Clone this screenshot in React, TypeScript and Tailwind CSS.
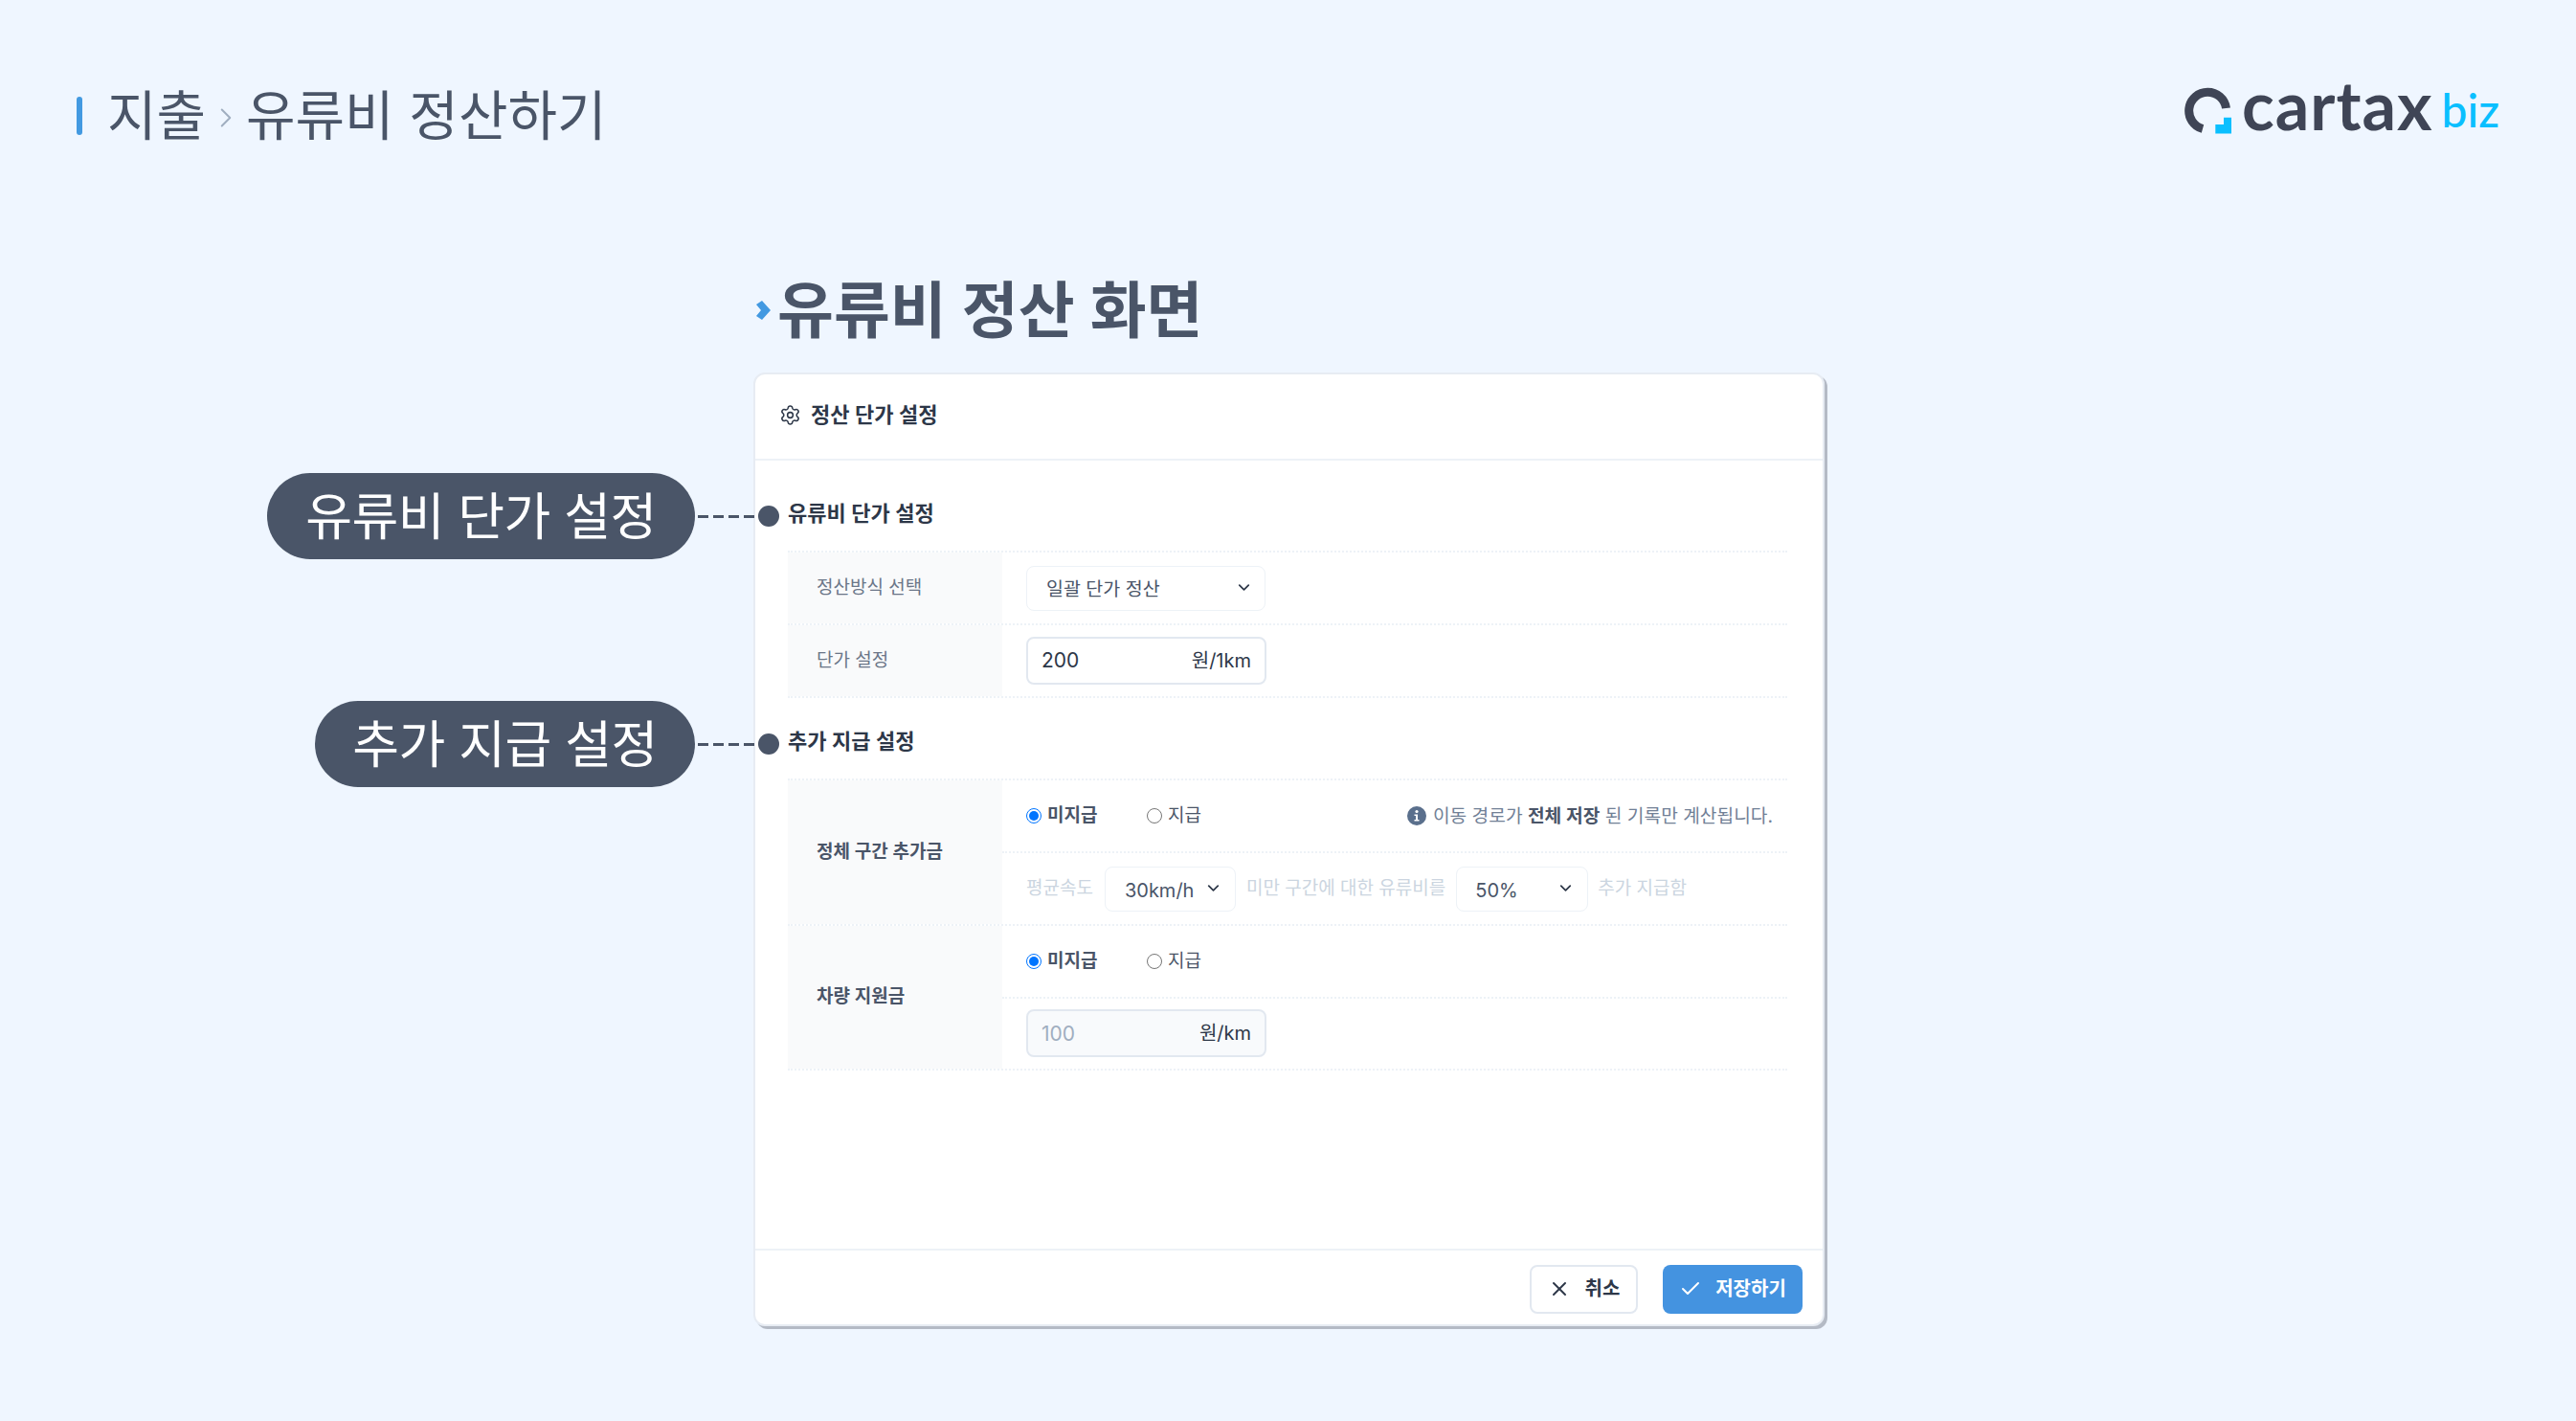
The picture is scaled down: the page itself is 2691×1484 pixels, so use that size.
import React from 'react';
import { ChevronDown, ChevronRight, Settings, X, Check } from 'lucide-react';

const FONT = 'font-[Inter,"Noto_Sans_CJK_KR",sans-serif]';

function Callout({ label, top, width }: { label: string; top: string; width: string }) {
  return (
    <div className={`absolute right-[calc(100%-25px)] flex items-center ${top}`}>
      <div className={`h-[90px] pt-[3px] rounded-full bg-[#4a5568] flex items-center justify-center text-white text-[53px] tracking-[-0.5px] ${width}`}>{label}</div>
      <div className="w-[63px] h-[3px] ml-[3px] bg-[repeating-linear-gradient(to_right,#4a5568_0,#4a5568_11px,transparent_11px,transparent_16px)]" />
      <div className="w-[22px] h-[22px] rounded-full bg-[#4a5568]" />
    </div>
  );
}

function Select({ value, width, height, pl, compact }: { value: string; width: string; height: string; pl: string; compact?: boolean }) {
  return (
    <div className={`flex items-center justify-between bg-white border border-[#edf2f7] rounded-lg text-[#4a5568] ${width} ${height} ${pl} ${compact ? 'pr-[13px] text-[20px]' : 'pr-[12px] text-[19.5px]'}`}>
      <span className="mt-[3px]">{value}</span>
      <ChevronDown size={19} strokeWidth={2.2} className="text-[#2d3748] -mt-[2px]" />
    </div>
  );
}

function Radio({ label, checked }: { label: string; checked?: boolean }) {
  return (
    <div className={`flex items-center gap-[6px] text-[19px] text-[#4a5568] ${checked ? 'font-semibold w-[126px]' : ''}`}>
      {checked ? (
        <span className="w-[16px] h-[16px] rounded-full border border-[#0075ff] flex items-center justify-center">
          <span className="w-[10px] h-[10px] rounded-full bg-[#0075ff]" />
        </span>
      ) : (
        <span className="w-[16px] h-[16px] rounded-full border border-[#767676] bg-white" />
      )}
      <span>{label}</span>
    </div>
  );
}

function Row({ label, children }: { label: string; children: React.ReactNode }) {
  return (
    <div className="flex h-[76px] border-b-2 border-dotted border-[#edf2f7]">
      <div className="w-[224px] bg-[#f9fafb] pl-[30px] flex items-center text-[19px] text-[#6b7688]">{label}</div>
      <div className="flex-1 pl-[25px] flex items-center">{children}</div>
    </div>
  );
}

function SubRow({ children, last }: { children: React.ReactNode; last?: boolean }) {
  return <div className={`flex-1 pl-[25px] pr-[15px] flex items-center ${last ? '' : 'border-b-2 border-dotted border-[#edf2f7]'}`}>{children}</div>;
}

export default function App() {
  return (
    <div className={`h-[1484px] bg-[#eff6ff] overflow-hidden text-[#2d3748] ${FONT}`}>
      <header className="flex items-start justify-between pt-[79px] pl-[80px] pr-[80px] h-[280px]">
        <div className="flex items-center text-[#4a5568] text-[56px] leading-[84px] h-[84px]">
          <div className="w-[6px] h-[40px] rounded-full bg-[#4299e1] mr-[26px]" />
          <span>지출</span>
          <ChevronRight size={34} strokeWidth={1.4} className="text-[#a0aec0] mx-[4px] mt-1" />
          <span>유류비 정산하기</span>
        </div>
        <div className="flex items-end h-[70px] -mt-[5px]">
          <svg width="50" height="50" viewBox="0 0 50 50" className="mb-[3px]">
            <path d="M 19 43.5 A 19.5 19.5 0 1 1 43.5 22" fill="none" stroke="#3f4556" strokeWidth="9" />
            <path d="M 41 31.7 H 49 V 48.5 H 32.3 V 39 H 41 Z" fill="#0abfff" />
          </svg>
          <span className="ml-[10px] text-[#3f4556] text-[70px] leading-[70px] font-bold tracking-[1px] font-[Lato,sans-serif]">cartax</span>
          <span className="ml-[9px] text-[#0abfff] text-[48px] leading-[58px] font-medium font-[Lato,sans-serif]">biz</span>
        </div>
      </header>

      <main className="ml-[787px] w-[1119px]">
        <div className="flex items-center h-[100px] mt-[-6px] mb-[15px]">
          <svg width="15" height="20" viewBox="0 0 15 20" className="ml-[3px] -mt-[1px]">
            <polygon points="0,4 6,0 15,10 6,20 0,16 5,10" fill="#4299e1" />
          </svg>
          <h1 className="ml-[7px] text-[64px] font-semibold text-[#4a5568]">유류비 정산 화면</h1>
        </div>

        <section className="relative h-[996px] flex flex-col bg-white rounded-[12px] border-2 border-[#e7ecf3] shadow-[3px_3px_0_#b4bac5]">
          <Callout label="유류비 단가 설정" top="top-[103px]" width="w-[447px]" />
          <Callout label="추가 지급 설정" top="top-[341px]" width="w-[397px]" />

          <div className="h-[90px] shrink-0 border-b-2 border-[#edf2f7] flex items-center gap-[10px] pl-[25px] pb-[3px] text-[22px] font-semibold">
            <Settings size={23} strokeWidth={1.6} />
            <span>정산 단가 설정</span>
          </div>

          <div className="flex-1 pl-[34px] pr-[37px]">
            <h2 className="h-[94px] pt-[37px] text-[22px] leading-[36px] font-semibold">유류비 단가 설정</h2>
            <div className="border-t-2 border-dotted border-[#edf2f7]">
              <Row label="정산방식 선택">
                <Select value="일괄 단가 정산" width="w-[250px]" height="h-[47px]" pl="pl-[20px]" />
              </Row>
              <Row label="단가 설정">
                <div className="w-[251px] h-[50px] bg-white border-2 border-[#e2e8f0] rounded-lg px-[14px] flex items-center justify-between text-[21px]">
                  <span>200</span>
                  <span className="text-[20px]">원/1km</span>
                </div>
              </Row>
            </div>

            <h2 className="h-[84px] pt-[27px] text-[22px] leading-[36px] font-semibold">추가 지급 설정</h2>
            <div className="border-t-2 border-dotted border-[#edf2f7]">
              <div className="flex h-[152px] border-b-2 border-dotted border-[#edf2f7]">
                <div className="w-[224px] bg-[#f9fafb] pl-[30px] flex items-center text-[19px] font-semibold text-[#4a5568]">정체 구간 추가금</div>
                <div className="flex-1 flex flex-col">
                  <SubRow>
                    <Radio label="미지급" checked />
                    <Radio label="지급" />
                    <div className="ml-auto flex items-center gap-[7px] text-[19.2px] text-[#718096]">
                      <svg width="20" height="20" viewBox="0 0 20 20">
                        <circle cx="10" cy="10" r="10" fill="#5a6f8c" />
                        <circle cx="10" cy="5.5" r="1.6" fill="#fff" />
                        <path d="M7.5 8.5 H11 V14 H12.5 V15.5 H7.5 V14 H9 V10 H7.5 Z" fill="#fff" />
                      </svg>
                      <span>이동 경로가 <b className="font-semibold text-[#4a5568]">전체 저장</b> 된 기록만 계산됩니다.</span>
                    </div>
                  </SubRow>
                  <SubRow last>
                    <div className="flex items-center text-[19px] text-[#cbd5e0]">
                      <span>평균속도</span>
                      <div className="ml-[12px] mr-[11px]"><Select value="30km/h" width="w-[137px]" height="h-[47px]" pl="pl-[20px]" compact /></div>
                      <span>미만 구간에 대한 유류비를</span>
                      <div className="ml-[11px] mr-[10px]"><Select value="50%" width="w-[138px]" height="h-[47px]" pl="pl-[19px]" compact /></div>
                      <span>추가 지급함</span>
                    </div>
                  </SubRow>
                </div>
              </div>
              <div className="flex h-[151px] border-b-2 border-dotted border-[#edf2f7]">
                <div className="w-[224px] bg-[#f9fafb] pl-[30px] flex items-center text-[19px] font-semibold text-[#4a5568]">차량 지원금</div>
                <div className="flex-1 flex flex-col">
                  <SubRow>
                    <Radio label="미지급" checked />
                    <Radio label="지급" />
                  </SubRow>
                  <SubRow last>
                    <div className="w-[251px] h-[50px] bg-[#f8fafc] border-2 border-[#e2e8f0] rounded-lg px-[14px] flex items-center justify-between text-[21px]">
                      <span className="text-[#a0aec0]">100</span>
                      <span className="text-[20px]">원/km</span>
                    </div>
                  </SubRow>
                </div>
              </div>
            </div>
          </div>

          <div className="h-[79px] shrink-0 border-t-2 border-[#edf2f7] flex items-center justify-end gap-[26px] pr-[21px] pt-[3px] text-[20px] font-semibold">
            <button className="w-[113px] h-[51px] rounded-lg border-2 border-[#e2e8f0] bg-white flex items-center justify-center gap-[15px]">
              <X size={24} strokeWidth={2} />
              <span>취소</span>
            </button>
            <button className="w-[146px] h-[51px] rounded-lg bg-[#4493e0] text-white flex items-center justify-center gap-[14px]">
              <Check size={24} strokeWidth={2} />
              <span>저장하기</span>
            </button>
          </div>
        </section>
      </main>
    </div>
  );
}
